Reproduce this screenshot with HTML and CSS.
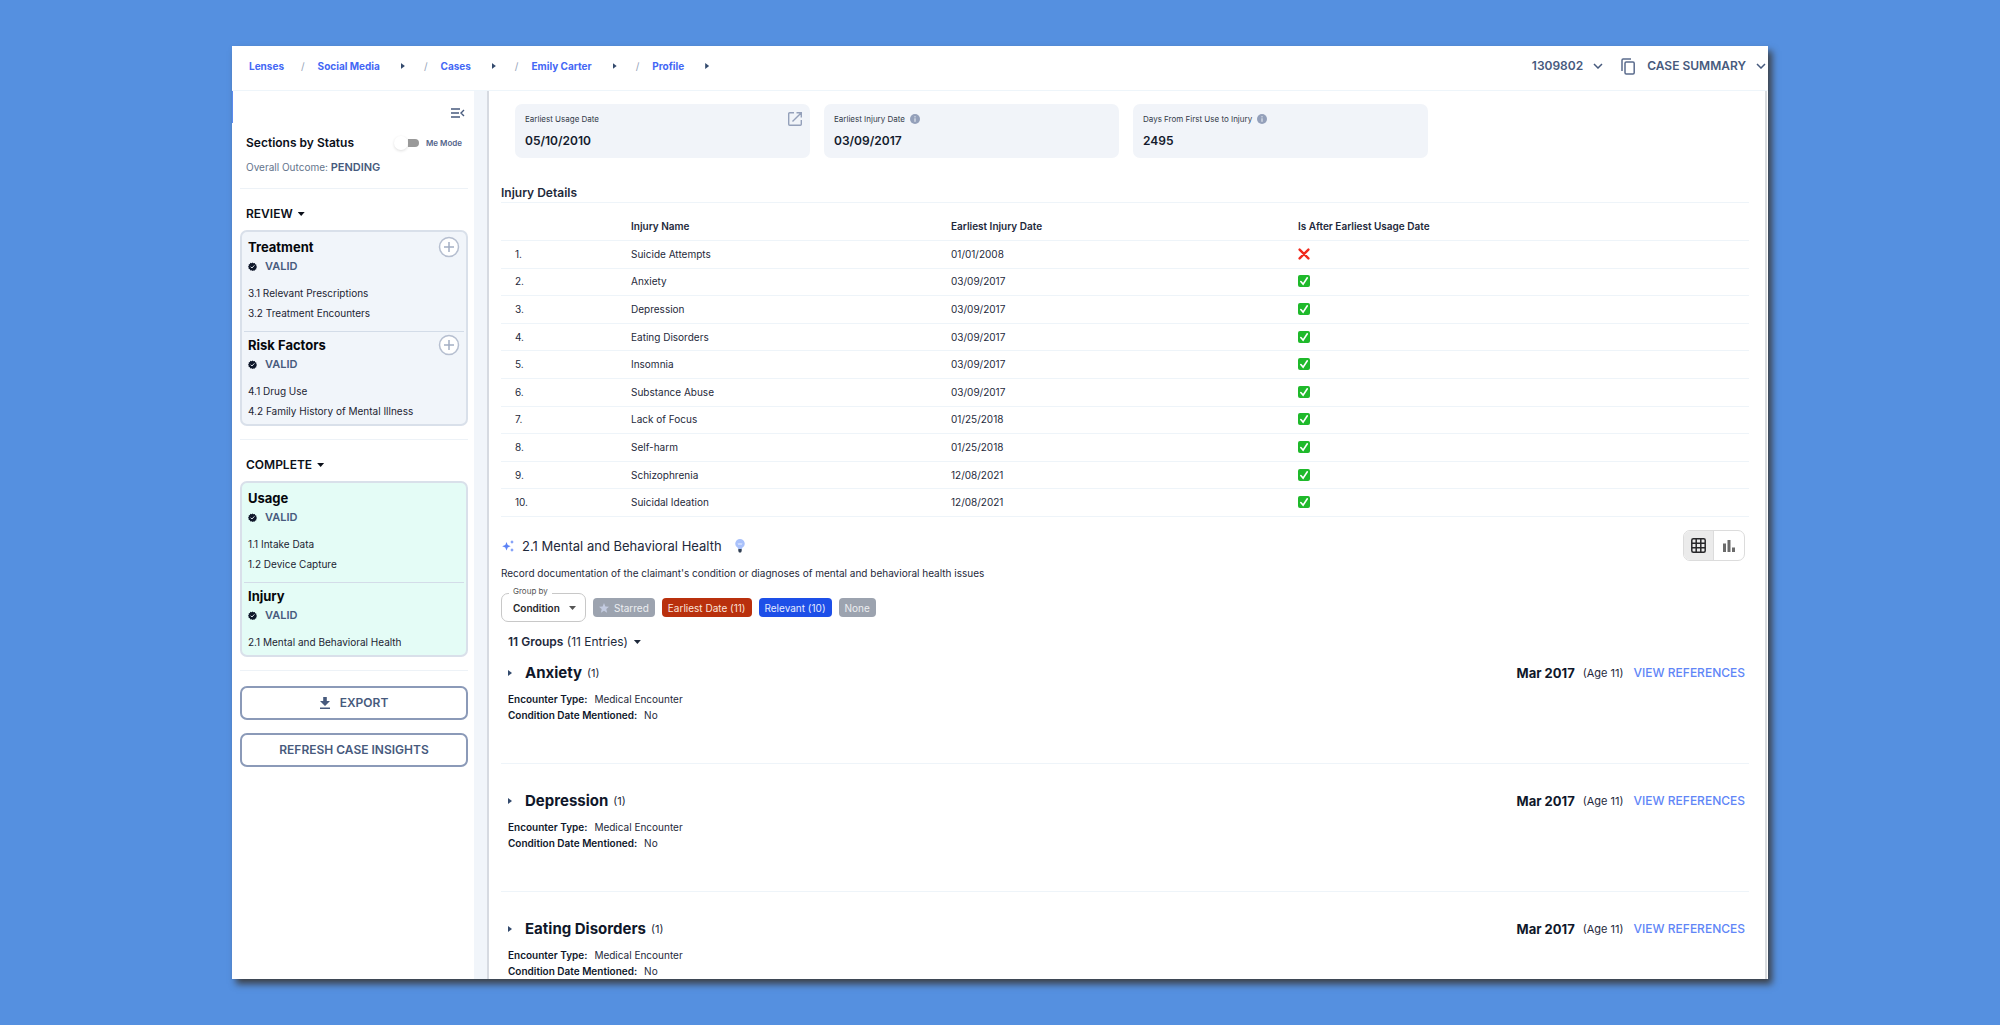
FILE: index.html
```html
<!DOCTYPE html>
<html lang="en">
<head>
  <meta charset="UTF-8">
  <title>Emily Carter - Profile</title>
  <link rel="stylesheet" href="styles.css">
</head>
<body>

  <!-- shared icons -->
  <svg class="sprite" aria-hidden="true">
    <symbol id="valid" viewBox="0 0 24 24">
      <path fill="#0f172a" d="M12 1l2.6 2.3 3.4-.5 1.3 3.2 3.2 1.4-.5 3.4L24 13l-2 2.800.2 3.400-3.400 1.200-1.500 3.100-3.400-.6L12 24l-2.300-1.900-3.400.4-1.500-3-3.200-1.300.3-3.500L0 12.500l2.200-2.400-.4-3.400L5 5.500l1.300-3.200 3.400.8z"/>
      <path fill="none" stroke="#e2e8f0" stroke-width="2.600" d="M7 12.500l3.500 3.500L17 9"/>
    </symbol>
    <symbol id="plus" viewBox="0 0 22 22">
      <circle cx="11" cy="11" r="9.500" fill="#fff" stroke="#b6bfd0" stroke-width="1.500"/>
      <path stroke="#a3aec4" stroke-width="1.500" d="M11 6v10M6 11h10"/>
    </symbol>
    <symbol id="info" viewBox="0 0 10 10">
      <circle cx="5" cy="5" r="5" fill="#94a0ba"/>
      <path stroke="#f1f5f9" stroke-width="1" d="M5 2.200v1.200M5 4.300v3.500"/>
    </symbol>
    <symbol id="chevron" viewBox="0 0 10 6">
      <path fill="none" stroke="#475a7d" stroke-width="1.500" d="M1 1l4 4 4-4"/>
    </symbol>
    <symbol id="yes" viewBox="0 0 12 12">
      <rect width="12" height="12" rx="2" fill="#1fb92b"/>
      <path fill="none" stroke="#fff" stroke-width="1.600" stroke-linecap="round" d="M2.800 6.500l2.300 2.600L9.300 2.800"/>
    </symbol>
    <symbol id="no" viewBox="0 0 12 12">
      <path stroke="#f02a1d" stroke-width="2.400" stroke-linecap="round" d="M1.600 1.600l8.800 8.800M10.400 1.600l-8.800 8.800"/>
    </symbol>
  </svg>

  <div class="window">
    <header class="topbar">
      <nav class="crumbs">
        <a href="#">Lenses</a>
        <span class="slash">/</span>
        <a href="#">Social Media</a><i class="arrow"></i>
        <span class="slash">/</span>
        <a href="#">Cases</a><i class="arrow"></i>
        <span class="slash">/</span>
        <a href="#">Emily Carter</a><i class="arrow"></i>
        <span class="slash">/</span>
        <a href="#">Profile</a><i class="arrow"></i>
      </nav>
      <div class="topActions">
        <button type="button" class="topBtn">1309802
          <svg width="10" height="6"><use href="#chevron"/></svg>
        </button>
        <button type="button" class="topBtn copyBtn" aria-label="Copy">
          <svg width="14" height="17" viewBox="0 0 14 17" fill="none" stroke="#5b6c8d" stroke-width="1.500">
            <path d="M1 13V2.200Q1 1 2.200 1H10"/>
            <rect x="4" y="4" width="9.200" height="12" rx="1.200"/>
          </svg>
        </button>
        <button type="button" class="topBtn">CASE SUMMARY
          <svg width="10" height="6"><use href="#chevron"/></svg>
        </button>
      </div>
    </header>

    <div class="body">
      <aside class="sidebar">
        <button type="button" class="collapse" aria-label="Collapse menu">
          <svg width="14" height="10" viewBox="0 0 14 10" fill="none" stroke="#475a7d" stroke-width="1.400">
            <path d="M0 1h9M0 5h8M0 9h9M13 2l-3 3 3 3"/>
          </svg>
        </button>

        <div class="statusHead">
          <h2>Sections by Status</h2>
          <label class="meMode">
            <input type="checkbox">
            <span class="track"></span>
            Me Mode
          </label>
        </div>
        <p class="outcome">Overall Outcome: <b>PENDING</b></p>

        <hr>
        <button type="button" class="groupBtn">REVIEW<i class="caret"></i></button>
        <div class="card">
          <section>
            <div class="cardTitle">
              <h3>Treatment</h3>
              <button type="button" class="addBtn" aria-label="Add treatment"><svg width="22" height="22"><use href="#plus"/></svg></button>
            </div>
            <p class="valid"><svg width="9" height="9"><use href="#valid"/></svg>VALID</p>
            <a href="#">3.1 Relevant Prescriptions</a>
            <a href="#">3.2 Treatment Encounters</a>
          </section>
          <section>
            <div class="cardTitle">
              <h3>Risk Factors</h3>
              <button type="button" class="addBtn" aria-label="Add risk factor"><svg width="22" height="22"><use href="#plus"/></svg></button>
            </div>
            <p class="valid"><svg width="9" height="9"><use href="#valid"/></svg>VALID</p>
            <a href="#">4.1 Drug Use</a>
            <a href="#">4.2 Family History of Mental Illness</a>
          </section>
        </div>

        <hr>
        <button type="button" class="groupBtn">COMPLETE<i class="caret"></i></button>
        <div class="card complete">
          <section>
            <div class="cardTitle"><h3>Usage</h3></div>
            <p class="valid"><svg width="9" height="9"><use href="#valid"/></svg>VALID</p>
            <a href="#">1.1 Intake Data</a>
            <a href="#">1.2 Device Capture</a>
          </section>
          <section>
            <div class="cardTitle"><h3>Injury</h3></div>
            <p class="valid"><svg width="9" height="9"><use href="#valid"/></svg>VALID</p>
            <a href="#">2.1 Mental and Behavioral Health</a>
          </section>
        </div>

        <hr>
        <button type="button" class="outlineBtn">
          <svg width="10" height="12" viewBox="0 0 10 12" fill="#475a7d">
            <path d="M3.200 0h3.600v4H10L5 9 0 4h3.200zM0 10.500h10V12H0z"/>
          </svg>
          EXPORT
        </button>
        <button type="button" class="outlineBtn">REFRESH CASE INSIGHTS</button>
      </aside>

      <main class="content">
        <div class="stats">
          <div class="stat">
            <p>Earliest Usage Date</p>
            <b>05/10/2010</b>
            <button type="button" class="openBtn" aria-label="Open">
              <svg width="14" height="14" viewBox="0 0 14 14" fill="none" stroke="#94a0ba" stroke-width="1.400">
                <path d="M6 .7H1.700q-1 0-1 1v10.600q0 1 1 1h10.600q1 0 1-1V8M8.500 .7h4.800v4.800M13.300 .7L4.500 9.500"/>
              </svg>
            </button>
          </div>
          <div class="stat">
            <p>Earliest Injury Date <svg width="10" height="10"><use href="#info"/></svg></p>
            <b>03/09/2017</b>
          </div>
          <div class="stat">
            <p>Days From First Use to Injury <svg width="10" height="10"><use href="#info"/></svg></p>
            <b>2495</b>
          </div>
        </div>

        <h2 class="tableTitle">Injury Details</h2>
        <table class="injuries">
          <thead>
            <tr><th class="num"></th><th class="name">Injury Name</th><th class="date">Earliest Injury Date</th><th>Is After Earliest Usage Date</th></tr>
          </thead>
          <tbody>
            <tr><td>1.</td><td>Suicide Attempts</td><td>01/01/2008</td><td><svg width="12" height="12" role="img" aria-label="No"><use href="#no"/></svg></td></tr>
            <tr><td>2.</td><td>Anxiety</td><td>03/09/2017</td><td><svg width="12" height="12" role="img" aria-label="Yes"><use href="#yes"/></svg></td></tr>
            <tr><td>3.</td><td>Depression</td><td>03/09/2017</td><td><svg width="12" height="12" role="img" aria-label="Yes"><use href="#yes"/></svg></td></tr>
            <tr><td>4.</td><td>Eating Disorders</td><td>03/09/2017</td><td><svg width="12" height="12" role="img" aria-label="Yes"><use href="#yes"/></svg></td></tr>
            <tr><td>5.</td><td>Insomnia</td><td>03/09/2017</td><td><svg width="12" height="12" role="img" aria-label="Yes"><use href="#yes"/></svg></td></tr>
            <tr><td>6.</td><td>Substance Abuse</td><td>03/09/2017</td><td><svg width="12" height="12" role="img" aria-label="Yes"><use href="#yes"/></svg></td></tr>
            <tr><td>7.</td><td>Lack of Focus</td><td>01/25/2018</td><td><svg width="12" height="12" role="img" aria-label="Yes"><use href="#yes"/></svg></td></tr>
            <tr><td>8.</td><td>Self-harm</td><td>01/25/2018</td><td><svg width="12" height="12" role="img" aria-label="Yes"><use href="#yes"/></svg></td></tr>
            <tr><td>9.</td><td>Schizophrenia</td><td>12/08/2021</td><td><svg width="12" height="12" role="img" aria-label="Yes"><use href="#yes"/></svg></td></tr>
            <tr><td>10.</td><td>Suicidal Ideation</td><td>12/08/2021</td><td><svg width="12" height="12" role="img" aria-label="Yes"><use href="#yes"/></svg></td></tr>
          </tbody>
        </table>

        <div class="sectionHead">
          <svg width="12" height="12" viewBox="0 0 12 12" fill="#5b82f5">
            <path d="M4.500 2l1.200 3L8.600 6.200 5.700 7.400 4.500 10.400 3.300 7.400 .2 6.200l3.100-1.200z"/>
            <path d="M10 0l.6 1.400L12 2l-1.400.6L10 4l-.6-1.400L8 2l1.400-.6zM10 8l.6 1.400L12 10l-1.400.6L10 12l-.6-1.400L8 10l1.400-.6z"/>
          </svg>
          <h2>2.1 Mental and Behavioral Health</h2>
          <svg width="10" height="14" viewBox="0 0 10 14">
            <path fill="#a9c1fb" d="M5 0a4.700 4.700 0 0 1 2.300 8.800L6.800 10H3.200l-.5-1.200A4.700 4.700 0 0 1 5 0z"/>
            <path fill="none" stroke="#dbe6ff" stroke-width=".8" d="M3 4l1 2 1-2 1 2 1-2"/>
            <path fill="#334155" d="M3.300 10h3.400v2L6 13.500H4L3.300 12z"/>
          </svg>
          <div class="viewToggle">
            <button type="button" class="active" aria-label="Table view">
              <svg width="15" height="15" viewBox="0 0 15 15" fill="none" stroke="#27272a" stroke-width="1.500">
                <rect x=".8" y=".8" width="13.400" height="13.400" rx="1.500"/>
                <path d="M5.200 1v13M9.800 1v13M1 5.200h13M1 9.800h13"/>
              </svg>
            </button>
            <button type="button" aria-label="Chart view">
              <svg width="12" height="12" viewBox="0 0 12 12" fill="#6b6b6b">
                <path d="M0 3.500h3V12H0zM4.500 0h3v12h-3zM9 7.500h3V12H9z"/>
              </svg>
            </button>
          </div>
        </div>
        <p class="description">Record documentation of the claimant's condition or diagnoses of mental and behavioral health issues</p>

        <div class="filters">
          <div class="groupBy">
            <label for="groupBy">Group by</label>
            <select id="groupBy">
              <option>Condition</option>
            </select>
            <i class="caret"></i>
          </div>
          <button type="button" class="chip">
            <svg width="10" height="10" viewBox="0 0 10 10" fill="#c3cbe0"><path d="M5 0l1.400 3.400 3.600.3-2.700 2.400.8 3.600L5 7.800 1.900 9.700l.8-3.600L0 3.700l3.600-.3z"/></svg>
            Starred
          </button>
          <button type="button" class="chip red">Earliest Date (11)</button>
          <button type="button" class="chip blue">Relevant (10)</button>
          <button type="button" class="chip">None</button>
        </div>

        <button type="button" class="groupsBtn"><span><b>11 Groups</b> (11 Entries)</span><i class="caret"></i></button>

        <article class="entry">
          <div class="entryHead">
            <i class="arrow"></i>
            <h3>Anxiety</h3><span class="count">(1)</span>
            <b class="when">Mar 2017</b><span class="age">(Age 11)</span><a href="#">VIEW REFERENCES</a>
          </div>
          <p><b>Encounter Type:</b>Medical Encounter</p>
          <p><b>Condition Date Mentioned:</b>No</p>
        </article>
        <article class="entry">
          <div class="entryHead">
            <i class="arrow"></i>
            <h3>Depression</h3><span class="count">(1)</span>
            <b class="when">Mar 2017</b><span class="age">(Age 11)</span><a href="#">VIEW REFERENCES</a>
          </div>
          <p><b>Encounter Type:</b>Medical Encounter</p>
          <p><b>Condition Date Mentioned:</b>No</p>
        </article>
        <article class="entry">
          <div class="entryHead">
            <i class="arrow"></i>
            <h3>Eating Disorders</h3><span class="count">(1)</span>
            <b class="when">Mar 2017</b><span class="age">(Age 11)</span><a href="#">VIEW REFERENCES</a>
          </div>
          <p><b>Encounter Type:</b>Medical Encounter</p>
          <p><b>Condition Date Mentioned:</b>No</p>
        </article>
      </main>
    </div>
  </div>

</body>
</html>
```

FILE: styles.css
```css
* {
  box-sizing: border-box;
}
body {
  margin: 0;
  height: 100vh;
  padding: 46px 232px;
  background: #5590e0;
  font-family: Inter, "Liberation Sans", sans-serif;
  font-size: 10px;
  line-height: 16px;
  color: #1e293b;
}
h2, h3, p {
  margin: 0;
}
a {
  text-decoration: none;
}
button {
  font: inherit;
  color: inherit;
  background: none;
  border: 0;
  padding: 0;
  cursor: pointer;
}
svg {
  flex: none;
}
.sprite {
  position: absolute;
  width: 0;
  height: 0;
}
.window {
  height: 100%;
  display: flex;
  flex-direction: column;
  background: #fff;
  overflow: hidden;
  box-shadow: 4px 5px 7px #3d4046;
}

/* top bar */
.topbar {
  flex: none;
  height: 45px;
  padding: 0 2px 4px 17px;
  display: flex;
  align-items: center;
  justify-content: space-between;
  border-bottom: 1px solid #eef5fa;
}
.crumbs {
  display: flex;
  align-items: center;
}
.crumbs a {
  font-weight: 700;
  color: #4367f5;
}
.crumbs .arrow {
  margin-left: 21px;
}
.slash {
  margin: 0 13px 0 17px;
  color: #94a3b8;
}
.arrow + .slash {
  margin-left: 19px;
}
.arrow {
  width: 4px;
  height: 6px;
  background: #334a6d;
  clip-path: polygon(0 0, 100% 50%, 0 100%);
}
.caret {
  width: 7px;
  height: 4px;
  background: currentColor;
  clip-path: polygon(0 0, 100% 0, 50% 100%);
}
.topActions {
  display: flex;
  align-items: center;
}
.topBtn {
  display: flex;
  align-items: center;
  gap: 10px;
  font-size: 12px;
  font-weight: 600;
  color: #475a7d;
}
.copyBtn {
  margin: 0 12px 0 18px;
}

.body {
  flex: 1;
  min-height: 0;
  display: flex;
}

/* sidebar */
.sidebar {
  flex: none;
  width: 257px;
  padding: 14px 19px 0 8px;
  border-right: 2px solid #d6dae1;
  background:
    linear-gradient(#5b8bee, #5b8bee) left top / 1px 32px no-repeat,
    linear-gradient(to left, #f1f5fa 13px, #fff 13px);
  display: flex;
  flex-direction: column;
}
.sidebar > * {
  flex: none;
}
.collapse {
  align-self: flex-end;
  height: 16px;
  margin-right: 3px;
  display: flex;
  align-items: center;
}
.statusHead {
  height: 20px;
  margin-top: 12px;
  padding: 0 6px;
  display: flex;
  align-items: center;
  justify-content: space-between;
}
.statusHead h2 {
  font-size: 12px;
  font-weight: 600;
  color: #0b0f19;
}
.meMode {
  display: flex;
  align-items: center;
  font-size: 8px;
  font-weight: 600;
  color: #53648a;
}
.meMode input {
  appearance: none;
  width: 14px;
  height: 14px;
  margin: 0;
  border-radius: 50%;
  background: #fff;
  box-shadow: 0 1px 3px #ddd;
}
.track {
  width: 11px;
  height: 8px;
  margin-right: 7px;
  border-radius: 0 4px 4px 0;
  background: #999;
}
.outcome {
  margin-top: 6px;
  padding: 0 6px;
  color: #64748b;
}
.outcome b {
  font-size: 11px;
  font-weight: 600;
  color: #475a7d;
}
.sidebar hr {
  height: 1px;
  margin: 13px 0 16px;
  border: 0;
  background: #edf2f7;
}
.groupBtn {
  align-self: flex-start;
  margin: 0 6px 7px;
  display: flex;
  align-items: center;
  gap: 5px;
  font-size: 12px;
  line-height: 18px;
  font-weight: 600;
  color: #0b0f19;
}
.card {
  border: 2px solid #d9e0ea;
  border-radius: 7px;
  background: #f1f5fa;
  padding: 0 2px;
}
.complete {
  background: #e4fcf6;
}
.card section {
  padding: 2px 4px 3px;
}
.card section:first-child {
  padding: 4px 4px 8px;
}
.card section + section {
  border-top: 1px solid #d3dce8;
}
.cardTitle {
  display: flex;
  align-items: center;
  justify-content: space-between;
  height: 22px;
}
.cardTitle h3 {
  font-size: 13px;
  font-weight: 700;
  color: #05070c;
}
.addBtn {
  display: flex;
}
.valid {
  display: flex;
  align-items: center;
  gap: 8px;
  margin-bottom: 9px;
  font-size: 11px;
  font-weight: 600;
  color: #475a7d;
}
.card a {
  display: block;
  line-height: 20px;
  color: #1c2433;
}
.outlineBtn {
  height: 34px;
  margin-bottom: 13px;
  border: 2px solid #8b9ab8;
  border-radius: 7px;
  display: flex;
  align-items: center;
  justify-content: center;
  gap: 10px;
  font-size: 12px;
  font-weight: 600;
  color: #475a7d;
}
.sidebar hr:last-of-type {
  margin-bottom: 15px;
}

/* main column */
.content {
  flex: 1;
  min-width: 0;
  margin-right: 1px;
  padding: 13px 16px 0 12px;
  overflow: hidden;
  border-right: 2px solid #d9dcdf;
}
.stats {
  display: flex;
  gap: 14px;
  margin-left: 14px;
}
.stat {
  position: relative;
  flex: 0 1 295px;
  height: 54px;
  padding: 7px 10px;
  border-radius: 7px;
  background: #f1f4f9;
}
.stat p {
  display: flex;
  align-items: center;
  gap: 5px;
  font-size: 8px;
  color: #333b49;
}
.stat b {
  display: block;
  margin-top: 6px;
  font-size: 12px;
  font-weight: 600;
  color: #141b2d;
}
.openBtn {
  position: absolute;
  top: 8px;
  right: 8px;
}
.openBtn svg {
  display: block;
}
.tableTitle {
  margin-top: 26px;
  font-size: 12px;
  line-height: 18px;
  font-weight: 600;
}
.injuries {
  width: 100%;
  height: 315px;
  border-collapse: collapse;
  table-layout: fixed;
  border-top: 1px solid #eef4f9;
}
.injuries th,
.injuries td {
  padding: 0 0 1px;
  text-align: left;
  border-bottom: 1px solid #eef4f9;
}
.injuries th {
  height: 38px;
  padding-top: 10px;
  font-weight: 600;
}
.injuries td:first-child {
  padding-left: 14px;
}
.injuries svg {
  display: block;
}
.num {
  width: 130px;
}
.name {
  width: 320px;
}
.date {
  width: 347px;
}

.sectionHead {
  display: flex;
  align-items: center;
  margin: 13px 4px 0 1px;
}
.sectionHead h2 {
  margin: 0 13px 0 8px;
  font-size: 13px;
  font-weight: 400;
}
.viewToggle {
  display: flex;
  margin-left: auto;
  border: 1px solid #dcdcdc;
  border-radius: 7px;
  overflow: hidden;
}
.viewToggle button {
  width: 30px;
  height: 29px;
  display: flex;
  align-items: center;
  justify-content: center;
}
.viewToggle .active {
  background: #ebebeb;
  border-right: 1px solid #dcdcdc;
}
.description {
  margin-top: 4px;
}
.filters {
  display: flex;
  align-items: center;
  gap: 7px;
  margin-top: 12px;
}
.groupBy {
  position: relative;
  color: #555;
}
.groupBy label {
  position: absolute;
  top: -8px;
  left: 8px;
  padding: 0 4px;
  background: #fff;
  font-size: 8px;
  line-height: 12px;
}
.groupBy select {
  appearance: none;
  display: block;
  width: 85px;
  height: 29px;
  padding: 0 11px;
  border: 1px solid #c8c8c8;
  border-radius: 7px;
  background: #fff;
  font: 600 10px/16px Inter, "Liberation Sans", sans-serif;
  color: #27272a;
}
.groupBy .caret {
  position: absolute;
  top: 13px;
  right: 10px;
}
.chip {
  display: flex;
  align-items: center;
  gap: 5px;
  height: 19px;
  padding: 0 6px;
  border-radius: 4px;
  background: #9ca3af;
  color: #eceef1;
}
.red {
  background: #b9300d;
  color: #fbe3da;
}
.blue {
  background: #1d4fe8;
  color: #e4ebff;
}
.groupsBtn {
  display: flex;
  align-items: center;
  gap: 6px;
  margin: 12px 0 0 7px;
  font-size: 12px;
}
.groupsBtn b {
  font-weight: 600;
}

/* grouped entries */
.entry {
  height: 128px;
  padding: 25px 4px 0 7px;
  border-bottom: 1px solid #eef4f9;
}
.groupsBtn + .entry {
  height: 114px;
  padding-top: 11px;
}
.entryHead {
  display: flex;
  align-items: center;
  height: 24px;
  margin-bottom: 6px;
}
.entryHead h3 {
  margin: 0 5px 0 13px;
  font-size: 15px;
  font-weight: 700;
  color: #0f172a;
}
.count,
.age {
  font-size: 11px;
}
.when {
  margin-left: auto;
  font-size: 13px;
  font-weight: 700;
  color: #0f172a;
}
.age {
  margin: 0 10px 0 8px;
}
.entryHead a {
  font-size: 12px;
  font-weight: 500;
  color: #5f86f7;
}
.entry p b {
  margin-right: 7px;
  font-weight: 600;
  color: #0f172a;
}
```
